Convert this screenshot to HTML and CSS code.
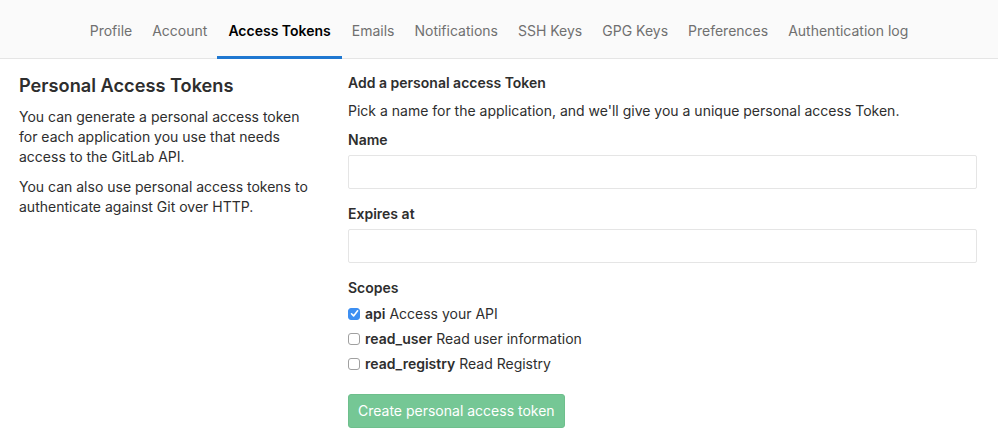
FILE: index.html
```html
<!DOCTYPE html>
<html>
<head>
<meta charset="utf-8">
<link rel="stylesheet" href="styles.css">
</head>
<body>
<nav class="nav">
  <a class="nav-item">Profile</a>
  <a class="nav-item">Account</a>
  <a class="nav-item active">Access Tokens</a>
  <a class="nav-item">Emails</a>
  <a class="nav-item">Notifications</a>
  <a class="nav-item">SSH Keys</a>
  <a class="nav-item">GPG Keys</a>
  <a class="nav-item">Preferences</a>
  <a class="nav-item">Authentication log</a>
</nav>
<main class="content">
  <section class="side">
    <h2 class="side-title">Personal Access Tokens</h2>
    <p class="side-text">You can generate a personal access token for each application you use that needs access to the GitLab API.</p>
    <p class="side-text">You can also use personal access tokens to authenticate against Git over HTTP.</p>
  </section>
  <section class="form">
    <h5 class="form-title">Add a personal access Token</h5>
    <p class="form-help">Pick a name for the application, and we'll give you a unique personal access Token.</p>
    <label class="label">Name</label>
    <div class="input"></div>
    <label class="label">Expires at</label>
    <div class="input"></div>
    <label class="label scopes-label">Scopes</label>
    <div class="scope">
      <span class="check checked"><svg width="9" height="9" viewBox="0 0 9 9"><path d="M1.5 4.8 L3.6 6.9 L7.6 1.8" fill="none" stroke="#fff" stroke-width="1.6" stroke-linecap="round" stroke-linejoin="round"/></svg></span>
      <span><b>api</b> Access your API</span>
    </div>
    <div class="scope">
      <span class="check"></span>
      <span><b>read_user</b> Read user information</span>
    </div>
    <div class="scope">
      <span class="check"></span>
      <span><b>read_registry</b> Read Registry</span>
    </div>
    <div class="actions">
      <span class="btn">Create personal access token</span>
    </div>
  </section>
</main>
</body>
</html>
```

FILE: styles.css
```css
* { box-sizing: border-box; }
html, body { margin: 0; padding: 0; background: #fff; }
body {
  font-family: Inter, "Liberation Sans", Arial, sans-serif;
  font-size: 14px;
  color: #2e2e2e;
  line-height: 20px;
}
.nav {
  height: 59px;
  background: #fafafa;
  border-bottom: 1px solid #e5e5e5;
  display: flex;
  justify-content: center;
  align-items: stretch;
}
.nav-item {
  padding: 21px 10px 0;
  color: #707070;
  font-size: 14px;
  margin-bottom: -1px;
  height: 59px;
}
.nav-item.active {
  color: #000;
  font-weight: 600;
  padding: 21px 11px 0;
  border-bottom: 3px solid #1f78d1;
}
.content {
  display: flex;
  padding: 14px 21px 0 19px;
}
.side {
  width: 329px;
  padding-right: 32px;
}
.side-title {
  margin: 0 0 10px;
  font-size: 18.2px;
  font-weight: 600;
  line-height: 24px;
  color: #2e2e2e;
}
.side-text {
  margin: 0 0 10px;
  font-size: 14px;
}
.form { flex: 1; }
.form-title {
  margin: 0 0 8px;
  font-size: 14px;
  font-weight: 600;
  line-height: 20px;
}
.form-help { margin: 0 0 9px; }
.label {
  display: block;
  font-weight: 600;
  margin-bottom: 5px;
}
.input {
  height: 34px;
  border: 1px solid #e5e5e5;
  border-radius: 2px;
  margin-bottom: 15px;
}
.scopes-label { margin-bottom: 3px; }
.scope {
  display: flex;
  align-items: center;
  height: 25px;
}
.check {
  width: 12px;
  height: 12px;
  border: 1px solid #a0a0a0;
  border-radius: 3px;
  margin-right: 5px;
  display: flex;
  align-items: center;
  justify-content: center;
  background: #fff;
}
.check.checked {
  background: #3d8ff2;
  border-color: #3d8ff2;
}
.scope b { font-weight: 600; }
.actions { padding-top: 18px; }
.btn {
  display: inline-block;
  height: 34px;
  padding: 7px 9px;
  background: #75c795;
  border: 1px solid #6ebf8c;
  border-radius: 3px;
  color: #fff;
  font-size: 14px;
  line-height: 18px;
}
```
